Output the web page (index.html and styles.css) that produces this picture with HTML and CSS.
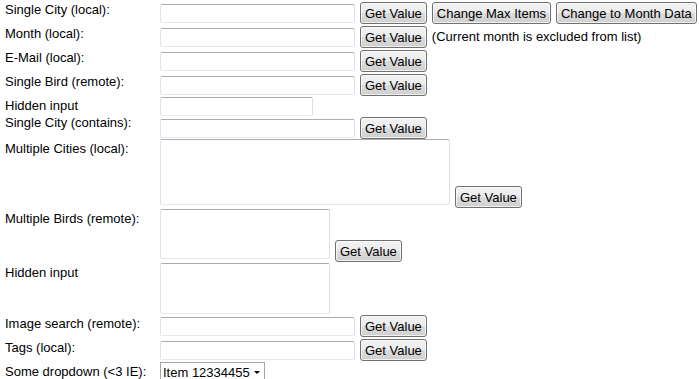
FILE: index.html
```html
<!DOCTYPE html>
<html>
<head>
    <title>Autocomplete Demo</title>
    <link rel="stylesheet" href="styles.css">
</head>
<body>
    <form class="demo">
        <div class="row">
            <label class="caption" for="city">Single City (local):</label>
            <div class="field">
                <input type="text" id="city" class="text">
                <button type="button" class="btn">Get Value</button>
                <button type="button" class="btn">Change Max Items</button>
                <button type="button" class="btn">Change to Month Data</button>
            </div>
        </div>

        <div class="row">
            <label class="caption" for="month">Month (local):</label>
            <div class="field">
                <input type="text" id="month" class="text">
                <button type="button" class="btn">Get Value</button>
                <span class="note">(Current month is excluded from list)</span>
            </div>
        </div>

        <div class="row">
            <label class="caption" for="email">E-Mail (local):</label>
            <div class="field">
                <input type="text" id="email" class="text">
                <button type="button" class="btn">Get Value</button>
            </div>
        </div>

        <div class="row">
            <label class="caption" for="bird">Single Bird (remote):</label>
            <div class="field">
                <input type="text" id="bird" class="text">
                <button type="button" class="btn">Get Value</button>
            </div>
        </div>

        <div class="row row-hidden">
            <label class="caption">Hidden input</label>
            <div class="field">
                <input type="text" class="text narrow">
            </div>
        </div>

        <div class="row row-contains">
            <label class="caption" for="cityContains">Single City (contains):</label>
            <div class="field">
                <input type="text" id="cityContains" class="text">
                <button type="button" class="btn">Get Value</button>
            </div>
        </div>

        <div class="row row-area cities">
            <label class="caption" for="cities">Multiple Cities (local):</label>
            <div class="field">
                <textarea id="cities" class="area wide"></textarea>
                <button type="button" class="btn">Get Value</button>
            </div>
        </div>

        <div class="row row-area birds">
            <label class="caption" for="birds">Multiple Birds (remote):</label>
            <div class="field">
                <textarea id="birds" class="area"></textarea>
                <button type="button" class="btn">Get Value</button>
            </div>
        </div>

        <div class="row row-area hidden-area">
            <label class="caption">Hidden input</label>
            <div class="field">
                <textarea class="area"></textarea>
            </div>
        </div>

        <div class="row row-flush">
            <label class="caption" for="images">Image search (remote):</label>
            <div class="field">
                <input type="text" id="images" class="text">
                <button type="button" class="btn">Get Value</button>
            </div>
        </div>

        <div class="row row-flush tags">
            <label class="caption" for="tags">Tags (local):</label>
            <div class="field">
                <input type="text" id="tags" class="text">
                <button type="button" class="btn">Get Value</button>
            </div>
        </div>

        <div class="row row-select">
            <label class="caption" for="dropdown">Some dropdown (&lt;3 IE):</label>
            <div class="field">
                <span class="select-wrap">
                    <select id="dropdown" class="dropdown">
                        <option>Item 12334455</option>
                        <option>Item 2</option>
                        <option>Item 3</option>
                    </select>
                </span>
            </div>
        </div>
    </form>
</body>
</html>
```

FILE: styles.css
```css
body {
    margin: 0;
    background-color: #FFF;
    color: #000;
    font-family: "Liberation Sans", Arial, sans-serif;
    font-size: 13px;
}

.row {
    display: flex;
    height: 24px;
}

.caption {
    width: 160px;
    flex-shrink: 0;
    box-sizing: border-box;
    padding: 2px 0 0 5px;
    line-height: 15px;
    white-space: nowrap;
}

.field {
    display: flex;
    align-items: flex-start;
    gap: 5px;
    padding-top: 2px;
}

.text {
    width: 195px;
    height: 19px;
    box-sizing: border-box;
    margin: 2px 0 0;
    padding: 0 2px;
    border: 1px solid;
    border-color: #ABADB3 #DBDFE6 #E3E9EF #E2E3EA;
    border-radius: 2px;
    font: inherit;
}

.text.narrow {
    width: 153px;
    margin-top: 1px;
}

.btn {
    height: 22px;
    box-sizing: border-box;
    margin: 0;
    padding: 0 4px;
    border: 1px solid #707070;
    border-radius: 3px;
    background: linear-gradient(#F2F2F2 0%, #EBEBEB 50%, #DDDDDD 50%, #CFCFCF 100%);
    box-shadow: inset 0 0 0 1px rgba(255, 255, 255, 0.7);
    color: #000;
    font-family: inherit;
    font-size: 13px;
    line-height: 15px;
    white-space: nowrap;
    cursor: pointer;
}

.note {
    margin-top: 3px;
    line-height: 15px;
    white-space: nowrap;
}

/* rows with a different rhythm */
.row-hidden {
    height: 19px;
}

.row-hidden .field {
    padding-top: 0;
}

.row-contains .caption {
    padding-top: 0;
}

.row-flush .field {
    padding-top: 0;
}

.row-flush .caption {
    padding-top: 1px;
}

.row-flush.tags {
    height: 23px;
}

.row-area .field {
    align-items: flex-end;
    padding-top: 0;
}

.row-area .btn {
    margin-bottom: 1px;
}

.area {
    width: 170px;
    box-sizing: border-box;
    margin: 0;
    padding: 2px;
    border: 1px solid;
    border-color: #ABADB3 #DBDFE6 #E3E9EF #E2E3EA;
    border-radius: 2px;
    resize: none;
    font: inherit;
}

.area.wide {
    width: 290px;
}

.cities {
    height: 70px;
}

.cities .area {
    height: 66px;
    margin-bottom: 4px;
}

.birds {
    height: 54px;
}

.birds .area {
    height: 50px;
    margin-bottom: 4px;
}

.hidden-area {
    height: 52px;
}

.hidden-area .area {
    height: 51px;
    margin-bottom: 1px;
}

.row-select .field {
    padding-top: 0;
}

.select-wrap {
    position: relative;
    display: inline-block;
}

.dropdown {
    width: 105px;
    height: 20px;
    box-sizing: border-box;
    margin: 0;
    padding: 0 0 0 2px;
    border: 1px solid #A5A5A5;
    border-radius: 0;
    background-color: #FFF;
    color: #000;
    font: inherit;
    line-height: 15px;
    appearance: none;
    -webkit-appearance: none;
}

.select-wrap::after {
    content: "";
    position: absolute;
    top: 9px;
    right: 5px;
    border-left: 3px solid transparent;
    border-right: 3px solid transparent;
    border-top: 3px solid #000;
    pointer-events: none;
}
```
